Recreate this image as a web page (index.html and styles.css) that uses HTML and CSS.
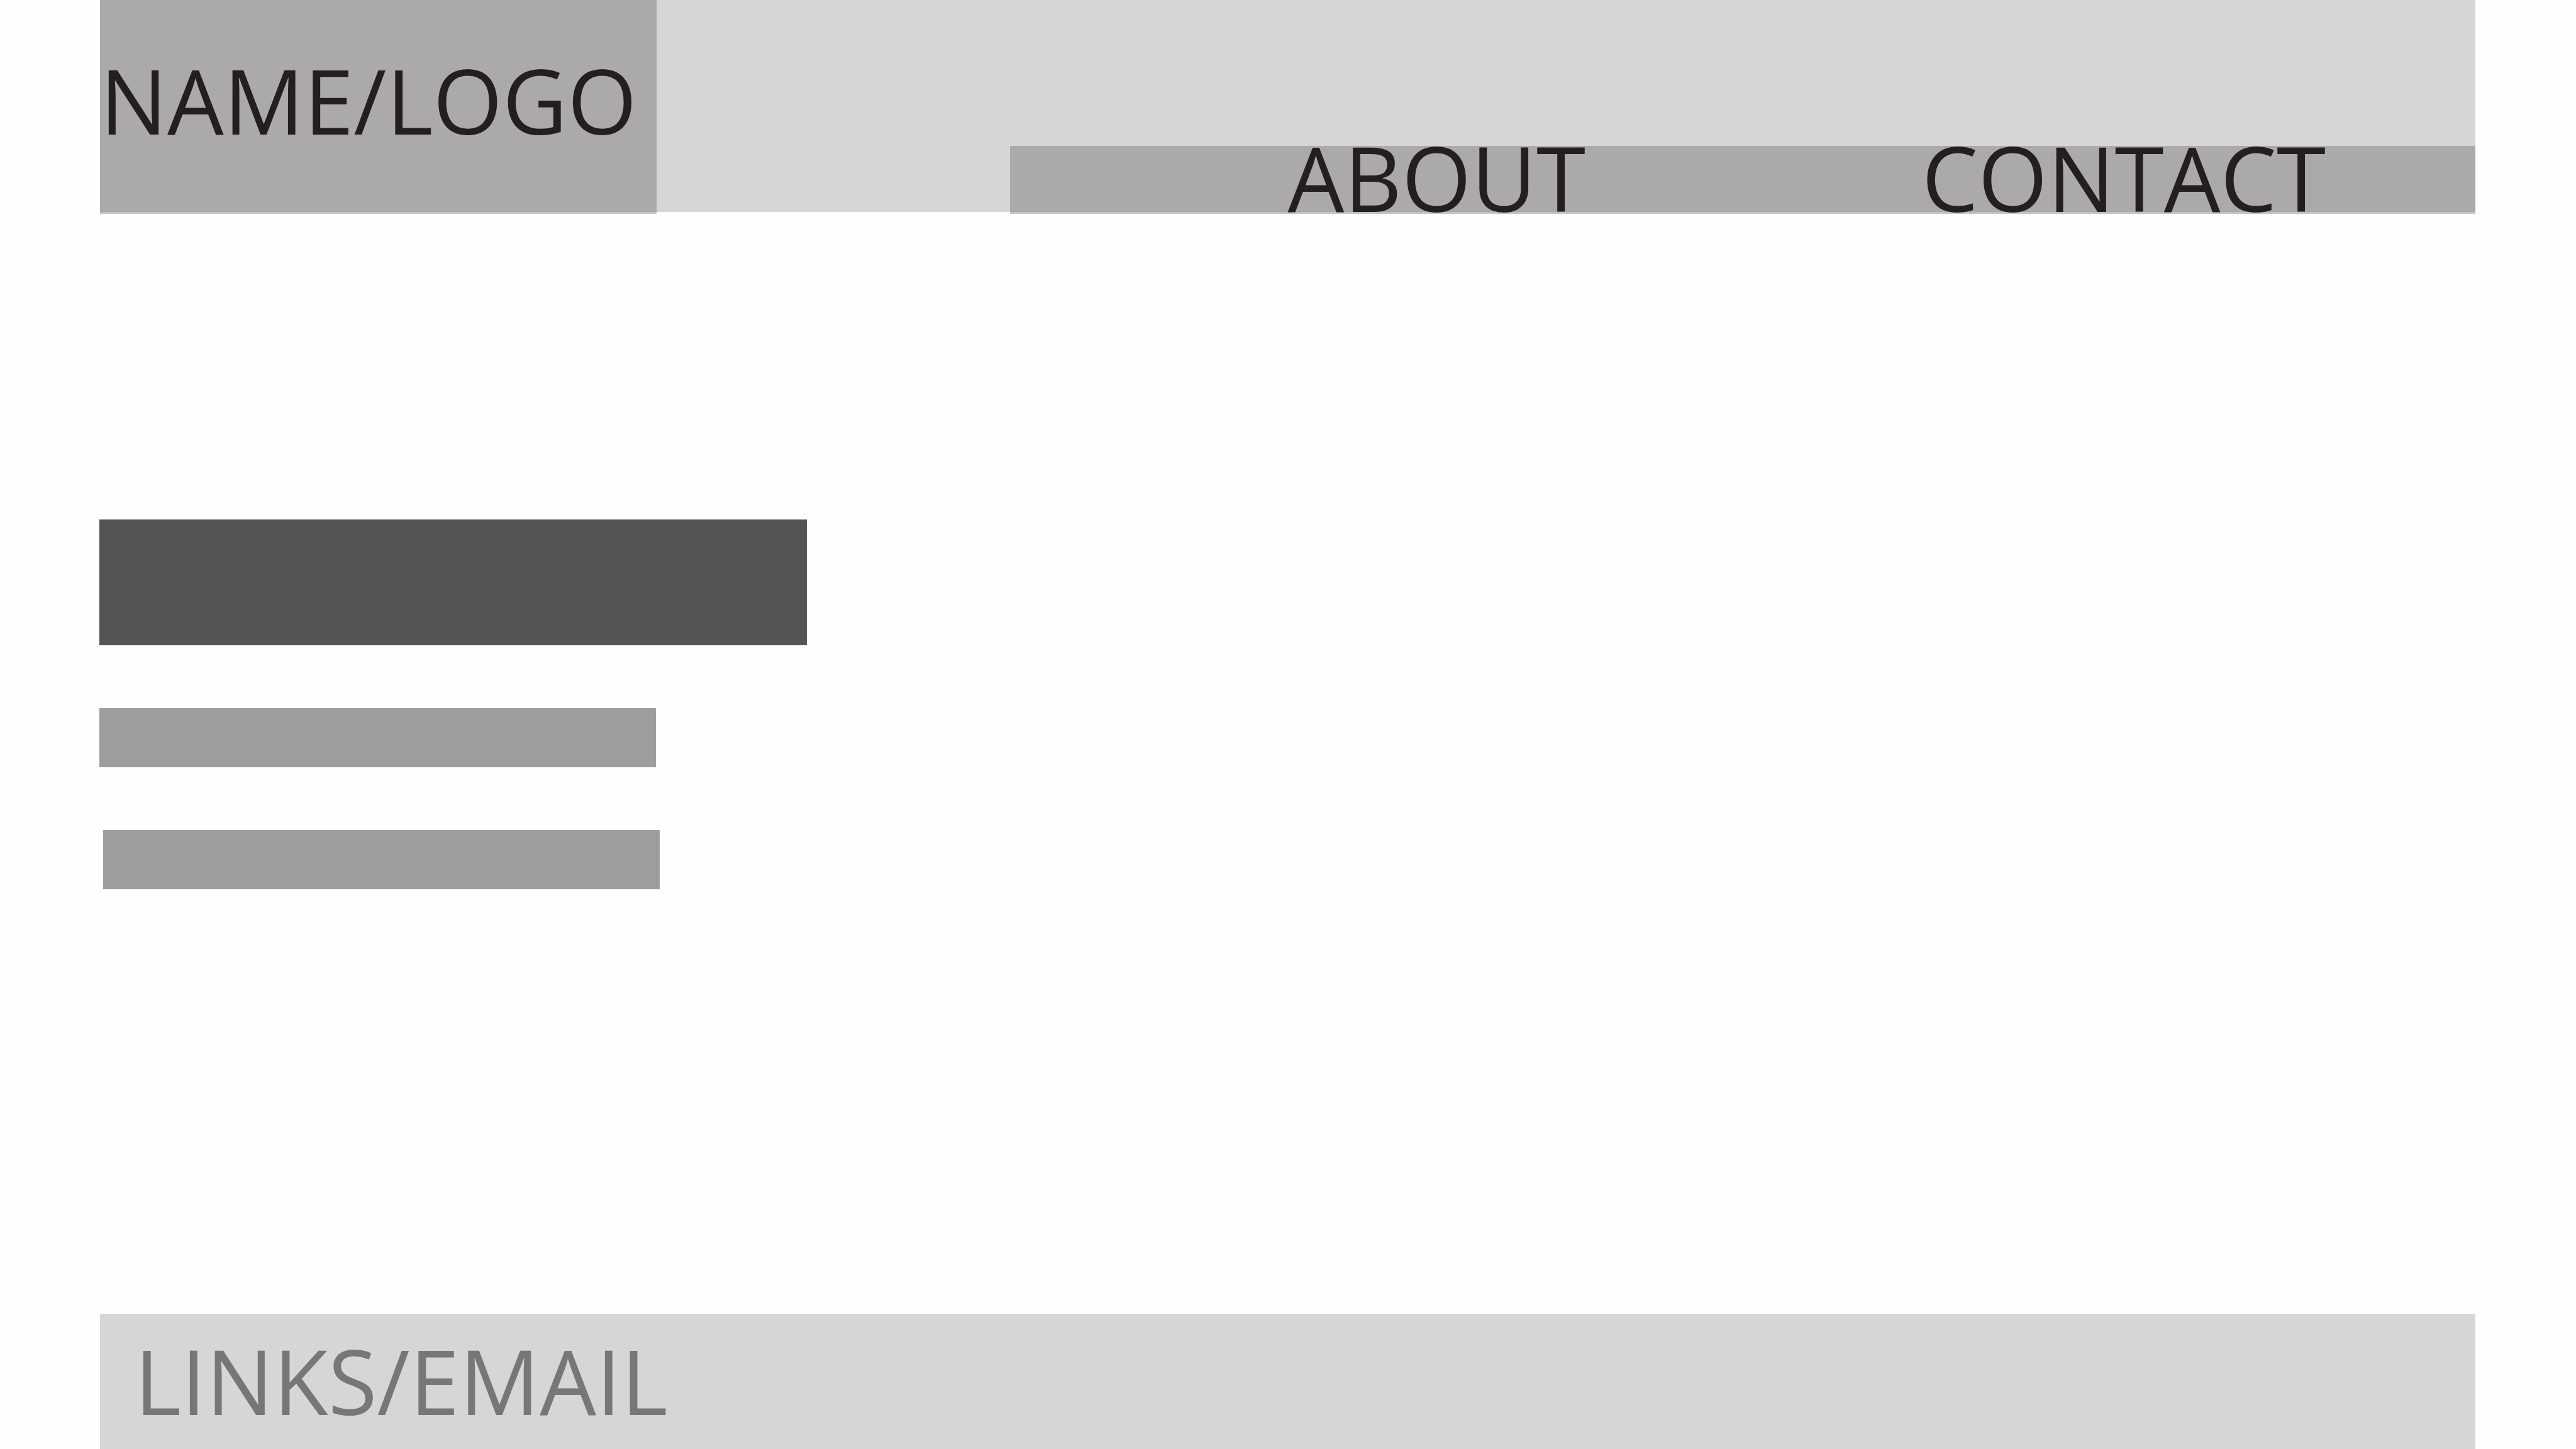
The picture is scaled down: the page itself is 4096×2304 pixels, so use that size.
FILE: index.html
```html
<!DOCTYPE html>
<html lang="en">
<head>
  <meta charset="utf-8">
  <meta name="viewport" content="width=device-width, initial-scale=1">
  <title>Name/Logo</title>
  <link rel="stylesheet" href="styles.css">
</head>
<body>
  <header class="header">
    <h1 class="logo">NAME/LOGO</h1>
    <nav class="nav">
      <a class="nav-link" href="#about">ABOUT</a>
      <a class="nav-link" href="#contact">CONTACT</a>
    </nav>
  </header>
  <main class="intro">
    <div class="bar bar-title"></div>
    <div class="bar"></div>
    <div class="bar bar-indent"></div>
  </main>
  <footer class="footer">
    <a class="footer-link" href="#links">LINKS/EMAIL</a>
  </footer>
</body>
</html>
```

FILE: styles.css
```css
* {
  box-sizing: border-box;
}

body {
  display: flex;
  flex-direction: column;
  min-height: 100vh;
  margin: 0;
  padding: 0 160px 0 159px;
  background: #fefefe;
  color: #231f20;
  font-family: "Open Sans", "Noto Sans", sans-serif;
  font-size: 142px;
  line-height: 200px;
}

a {
  color: inherit;
  text-decoration: none;
}

/* Header: the logo block and nav strip hang slightly below the band */
.header {
  display: grid;
  grid-template-columns: 885fr 562fr 2329fr;
  margin-bottom: 3px;
  background: #d7d5d6;
}

.logo {
  margin: 0 0 -3px;
  padding: 59px 0 78px;
  border-bottom: 3px solid #c4c3c4;
  background: #aba9aa;
  font-size: inherit;
  font-weight: 400;
}

.nav {
  display: grid;
  grid-column: 3;
  grid-template-columns: 441fr 1008fr 880fr;
  align-self: end;
  height: 108px;
  margin-bottom: -3px;
  border-bottom: 3px solid #c4c3c4;
  background: #aba9aa;
  line-height: 100px;
}

.nav-link:first-child {
  grid-column: 2;
}

.intro {
  display: flex;
  flex: 1;
  flex-direction: column;
  gap: 100px;
  margin-left: -1px;
  padding: 486px 0 100px;
}

.bar {
  width: 885px;
  max-width: 100%;
  height: 94px;
  background: #9d9d9d;
}

.bar-title {
  width: 1125px;
  height: 200px;
  background: #555354;
}

.bar-indent {
  margin-left: 6px;
}

.footer {
  padding: 6px 55px 9px;
  background: #d7d5d6;
  color: #777777;
}
```
